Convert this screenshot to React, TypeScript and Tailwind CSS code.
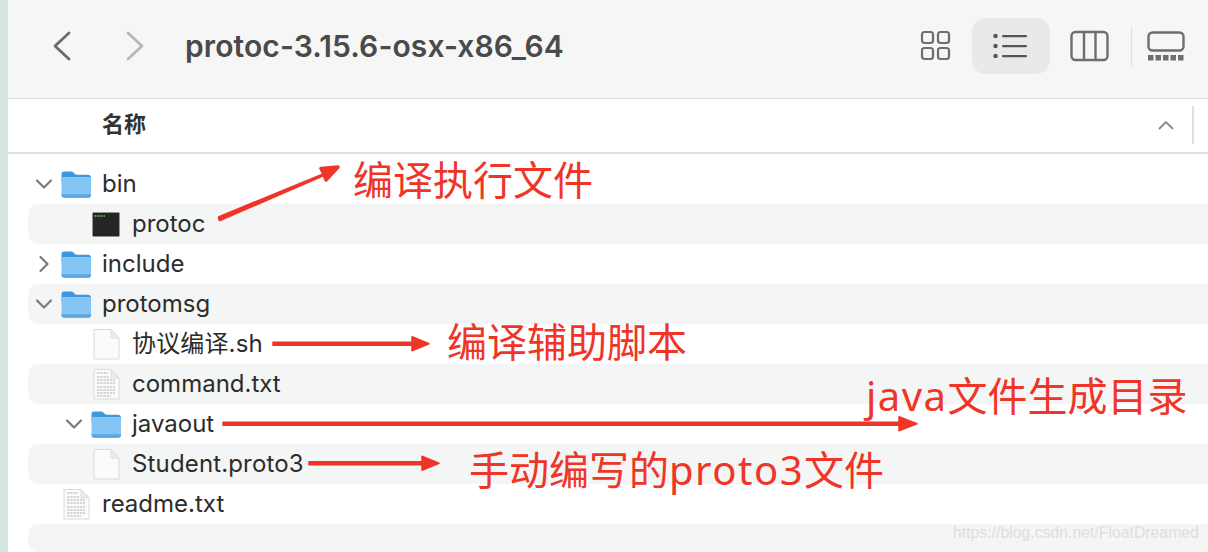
const SANS = "font-['Inter','Noto_Sans_CJK_SC',sans-serif]";

function Folder() {
  return (
    <svg width="32" height="32" viewBox="0 0 32 32" className="shrink-0">
      <path d="M1.500 6C1.500 4.300 2.500 3.500 4 3.500h7.300c1 0 1.500.4 2.200 1.100l1.400 1.400c.5.5 1 .7 1.700.7h11C30 6.700 31 7.900 31 9.500v5H1.500z" fill="#3f97dd" />
      <path d="M1.500 10.500C1.500 9.500 2.300 9 3.100 9h26.300c.9 0 1.600.6 1.600 1.600V27c0 1.700-1.100 2.800-2.800 2.800H4.300C2.600 29.800 1.500 28.700 1.500 27z" fill="#84c5f5" />
      <path d="M1.500 26.300H31v1c0 1.600-1.100 2.500-2.800 2.500H4.300c-1.700 0-2.800-.9-2.800-2.500z" fill="#5aa6e0" />
    </svg>
  );
}

function Terminal() {
  return (
    <svg width="32" height="32" viewBox="0 0 32 32" className="shrink-0">
      <rect x="2.500" y="4.500" width="27" height="24" rx="1" fill="#252525" stroke="#999999" strokeWidth=".6" />
      <path d="M4.500 8h2.500M7.500 8h2.500M10.500 8h2.500M13.500 8h1.500" stroke="#67c467" strokeWidth="1.500" strokeDasharray="1.500 .5" />
    </svg>
  );
}

function Doc({ lines }: { lines?: boolean }) {
  return (
    <svg width="32" height="32" viewBox="0 0 32 32" className="shrink-0">
      <path d="M4 1.500h17l8 8.500v21H4z" fill="#fbfbfb" stroke="#dadada" strokeWidth="1" />
      <path d="M21 1.500v8.500h8z" fill="#ececec" stroke="#dadada" strokeWidth=".8" />
      {lines && (
        <g stroke="#b0b0b0" strokeWidth="1.200" strokeDasharray="2.400 .8">
          <path d="M7 5h11M7 9h12M7 12h18M7 15h18M7 19h18M7 22h18M7 25h18M7 28h14" />
        </g>
      )}
    </svg>
  );
}

function Chevron({ dir }: { dir: "down" | "right" }) {
  return (
    <svg width="18" height="18" viewBox="0 0 18 18" className="shrink-0" fill="none" stroke="#7b7b7b" strokeWidth="2.200" strokeLinecap="round" strokeLinejoin="round">
      {dir === "down" ? <path d="M2 5.500l7 7 7-7" /> : <path d="M5.500 2l7 7-7 7" />}
    </svg>
  );
}

type Row = {
  name: string;
  depth: 0 | 1;
  icon: "folder" | "term" | "blank" | "text";
  chev?: "down" | "right";
  striped?: boolean;
  wide?: boolean;
};

const rows: Row[] = [
  { name: "bin", depth: 0, icon: "folder", chev: "down" },
  { name: "protoc", depth: 1, icon: "term", striped: true },
  { name: "include", depth: 0, icon: "folder", chev: "right" },
  { name: "protomsg", depth: 0, icon: "folder", chev: "down", striped: true },
  { name: "协议编译.sh", depth: 1, icon: "blank", wide: true },
  { name: "command.txt", depth: 1, icon: "text", striped: true },
  { name: "javaout", depth: 1, icon: "folder", chev: "down" },
  { name: "Student.proto3", depth: 1, icon: "blank", striped: true, wide: true },
  { name: "readme.txt", depth: 0, icon: "text" },
];

function FileRow({ r }: { r: Row }) {
  return (
    <div className={`h-10 flex items-center rounded-l-[10px] ${r.striped ? "bg-[#f4f5f5]" : ""} ${r.depth ? "pl-[36px]" : "pl-[6px]"}`}>
      <div className="w-[18px] flex justify-center translate-x-px">{r.chev && <Chevron dir={r.chev} />}</div>
      <div className="ml-[8px] w-[32px] flex justify-center">
        {r.icon === "folder" && <Folder />}
        {r.icon === "term" && <Terminal />}
        {r.icon === "blank" && <Doc />}
        {r.icon === "text" && <Doc lines />}
      </div>
      <span className={`ml-[10px] text-[24px] leading-none text-[#2c2c2c] whitespace-nowrap ${r.wide ? "tracking-[0.15px]" : ""}`}>{r.name}</span>
    </div>
  );
}

const ann = "absolute text-[40px] leading-none text-[#ee3528] whitespace-nowrap font-['Noto_Sans','Noto_Sans_CJK_SC',sans-serif]";

export default function App() {
  return (
    <div className={`relative w-[1208px] h-[552px] overflow-hidden bg-white flex ${SANS}`}>
      <div className="w-[7px] bg-[#d6e4e2] shrink-0" />
      <div className="flex-1 min-w-0 flex flex-col border-l border-[#dcdcdc]">
        <header className="h-[99px] bg-[#f6f6f6] border-b border-[#dddddd] flex items-center pl-[43px] pr-[23px] pb-[6px] shrink-0">
          <svg width="22" height="32" viewBox="0 0 22 32" fill="none" stroke="#6a6a6a" strokeWidth="2.800" strokeLinecap="round" strokeLinejoin="round"><path d="M18 3 4 16l14 13" /></svg>
          <svg width="22" height="32" viewBox="0 0 22 32" fill="none" stroke="#b8b8b8" strokeWidth="2.800" strokeLinecap="round" strokeLinejoin="round" className="ml-[51px]"><path d="M4 3l14 13L4 29" /></svg>
          <h1 className="ml-[39px] text-[30px] font-semibold text-[#4a4a4a] whitespace-nowrap tracking-[0.1px]">protoc-3.15.6-osx-x86_64</h1>
          <div className="ml-auto flex items-center">
            <svg width="32" height="32" viewBox="0 0 32 32" fill="none" stroke="#6e6e6e" strokeWidth="2.200"><rect x="2" y="2" width="11" height="11" rx="2.500" /><rect x="18" y="2" width="11" height="11" rx="2.500" /><rect x="2" y="18" width="11" height="11" rx="2.500" /><rect x="18" y="18" width="11" height="11" rx="2.500" /></svg>
            <div className="ml-[20px] w-[78px] h-[56px] rounded-[14px] bg-[#e9e9e9] flex items-center justify-center pr-[3px]">
              <svg width="34" height="24" viewBox="0 0 34 24" fill="#555555"><circle cx="2.500" cy="2" r="2.200" /><circle cx="2.500" cy="12" r="2.200" /><circle cx="2.500" cy="22" r="2.200" /><rect x="9" y="1" width="25" height="2.200" rx="1" /><rect x="9" y="11" width="25" height="2.200" rx="1" /><rect x="9" y="21" width="25" height="2.200" rx="1" /></svg>
            </div>
            <svg width="40" height="32" viewBox="0 0 40 32" fill="none" stroke="#6e6e6e" strokeWidth="2.400" className="ml-[20px]"><rect x="1.500" y="2" width="36" height="28" rx="4" /><path d="M14 2v28M25.500 2v28" /></svg>
            <div className="ml-[21px] w-px h-[40px] bg-[#e0e0e0]" />
            <svg width="38" height="30" viewBox="0 0 38 30" className="ml-[15px]"><rect x="1.500" y="1.500" width="35" height="18" rx="4" fill="none" stroke="#6e6e6e" strokeWidth="2.400" /><g fill="#6e6e6e"><rect x="1" y="24" width="5.500" height="5.500" /><rect x="8.500" y="24" width="5.500" height="5.500" /><rect x="16" y="24" width="5.500" height="5.500" /><rect x="23.500" y="24" width="5.500" height="5.500" /><rect x="31" y="24" width="5.500" height="5.500" /></g></svg>
          </div>
        </header>
        <div className="h-[55px] border-b-2 border-[#e2e2e2] flex items-center pl-[94px] pr-[14px] pb-[2px] shrink-0">
          <span className="text-[22px] font-semibold text-[#333333]">名称</span>
          <svg width="18" height="12" viewBox="0 0 18 12" fill="none" stroke="#8a8a8a" strokeWidth="1.800" className="ml-auto mr-[17px]"><path d="M2 10l7-7 7 7" /></svg>
          <div className="w-[2px] h-[38px] bg-[#e0e0e0]" />
        </div>
        <div className="flex-1 pt-[10px] pl-[20px] flex flex-col">
          {rows.map((r) => <FileRow key={r.name} r={r} />)}
          <div className="flex-1 bg-[#f4f5f5] rounded-l-[10px]" />
        </div>
      </div>

      <svg width="1208" height="552" className="absolute inset-0 pointer-events-none">
        <g fill="#ee3528" stroke="#ee3528" strokeLinejoin="round">
          <path d="M219.500 217.500 324 174.500l-3-6 17-1.500-12 13-2-5.500-104 45z" strokeWidth="3.500" />
          <path d="M273 342.300h139v-5.500l17 7-17 7v-5.500H273z" strokeWidth="1.500" />
          <path d="M223 422.300h676v-5.500l18 7-18 7v-5.500H223z" strokeWidth="1.500" />
          <path d="M309 461.800h113v-5.500l17 7-17 7v-5.500H309z" strokeWidth="1.500" />
        </g>
      </svg>
      <span className={`${ann} left-[353px] top-[160px]`}>编译执行文件</span>
      <span className={`${ann} left-[447px] top-[322px]`}>编译辅助脚本</span>
      <span className={`${ann} left-[866px] top-[376px]`}><span className="tracking-[1.500px]">java</span>文件生成目录</span>
      <span className={`${ann} left-[469px] top-[450px]`}>手动编写的<span className="tracking-[1.500px]">proto3</span>文件</span>
      <span className="absolute left-[953px] top-[523px] text-[15.800px] leading-[20px] text-[#dedede] font-['Liberation_Sans',sans-serif] whitespace-nowrap">https://blog.csdn.net/FloatDreamed</span>
    </div>
  );
}
